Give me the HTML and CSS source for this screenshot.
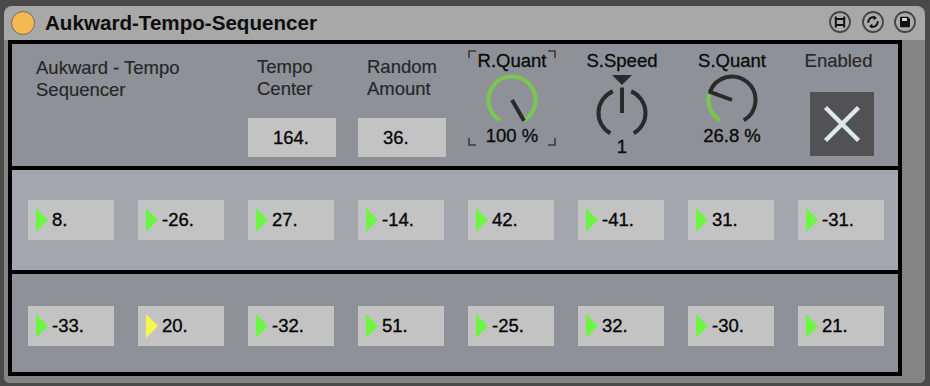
FILE: index.html
```html
<!DOCTYPE html>
<html>
<head>
<meta charset="utf-8">
<link rel="stylesheet" href="styles.css">
</head>
<body>
<div class="window">
  <div class="titlebar">
    <span class="dot"></span>
    <span class="title">Aukward-Tempo-Sequencer</span>
    <div class="tools">
      <svg class="tool" viewBox="0 0 22 22" width="22" height="22">
        <circle cx="11" cy="11" r="10" class="ring"/>
        <path d="M6.8 5.6V16.4M15.2 5.6V16.4M6.8 8.1H15.2M6.8 13.9H15.2" class="ink"/>
      </svg>
      <svg class="tool" viewBox="0 0 22 22" width="22" height="22">
        <circle cx="11" cy="11" r="10" class="ring"/>
        <path d="M6.3 11.8A4.9 4.9 0 0 1 12.9 6.6" class="ink"/>
        <path d="M11.6 4.4L15 6.9L11.7 9.3Z" class="fillink"/>
        <path d="M15.7 10.2A4.9 4.9 0 0 1 9.1 15.4" class="ink"/>
        <path d="M10.4 17.6L7 15.1L10.3 12.7Z" class="fillink"/>
      </svg>
      <svg class="tool" viewBox="0 0 22 22" width="22" height="22">
        <circle cx="11" cy="11" r="10" class="ring"/>
        <path d="M6 6.8Q6 5.8 7 5.8H13.8L16 8V15.2Q16 16.2 15 16.2H7Q6 16.2 6 15.2Z" class="fillink"/>
        <rect x="8" y="7" width="5" height="3" fill="#d6d6d6"/>
      </svg>
    </div>
  </div>
  <div class="body">
    <div class="panel">
      <section class="sec sec-top">
        <div class="intro">Aukward - Tempo<br>Sequencer</div>
        <div class="numcol">
          <div class="lbl">Tempo<br>Center</div>
          <div class="numbox">164.</div>
        </div>
        <div class="numcol">
          <div class="lbl">Random<br>Amount</div>
          <div class="numbox">36.</div>
        </div>
        <div class="dial dial-rq">
          <svg class="brackets" viewBox="0 0 88 96" width="88" height="96">
            <path d="M1 8V1H8M80 1H87V8M1 88V95H8M80 95H87V88"/>
          </svg>
          <div class="dlabel">R.Quant</div>
          <svg class="knob" viewBox="0 0 60 52" width="60" height="52">
            <path d="M18.25 46.35A23.5 23.5 0 1 1 41.75 46.35" class="arc-on"/>
            <path d="M30 26L42 46.8" class="needle"/>
          </svg>
          <div class="dval">100 %</div>
        </div>
        <div class="dial dial-sp">
          <div class="dlabel">S.Speed</div>
          <svg class="knob-sp" viewBox="0 0 60 68" width="60" height="68">
            <path d="M20 3H40L30 13Z" class="tri"/>
            <path d="M18.25 61.35A23.5 23.5 0 0 1 20.82 19.36" class="arc-off"/>
            <path d="M39.18 19.36A23.5 23.5 0 0 1 41.75 61.35" class="arc-off"/>
            <path d="M30 15.5V41" class="needle"/>
          </svg>
          <div class="dval dval-sp">1</div>
        </div>
        <div class="dial">
          <div class="dlabel">S.Quant</div>
          <svg class="knob" viewBox="0 0 60 52" width="60" height="52">
            <path d="M18.25 46.35A23.5 23.5 0 0 1 7.98 17.8" class="arc-on"/>
            <path d="M7.98 17.8A23.5 23.5 0 1 1 41.75 46.35" class="arc-off"/>
            <path d="M30 26L6.6 17.3" class="needle"/>
          </svg>
          <div class="dval">26.8 %</div>
        </div>
        <div class="togglecol">
          <div class="dlabel lbl-en">Enabled</div>
          <div class="toggle">
            <svg viewBox="0 0 64 64" width="64" height="64">
              <path d="M15.5 15.5L48.5 48.5M48.5 15.5L15.5 48.5" class="xmark"/>
            </svg>
          </div>
        </div>
      </section>
      <section class="sec sec-row sec-mid">
        <div class="step"><span class="play"></span>8.</div>
        <div class="step"><span class="play"></span>-26.</div>
        <div class="step"><span class="play"></span>27.</div>
        <div class="step"><span class="play"></span>-14.</div>
        <div class="step"><span class="play"></span>42.</div>
        <div class="step"><span class="play"></span>-41.</div>
        <div class="step"><span class="play"></span>31.</div>
        <div class="step"><span class="play"></span>-31.</div>
      </section>
      <section class="sec sec-row sec-bot">
        <div class="step"><span class="play"></span>-33.</div>
        <div class="step"><span class="play active"></span>20.</div>
        <div class="step"><span class="play"></span>-32.</div>
        <div class="step"><span class="play"></span>51.</div>
        <div class="step"><span class="play"></span>-25.</div>
        <div class="step"><span class="play"></span>32.</div>
        <div class="step"><span class="play"></span>-30.</div>
        <div class="step"><span class="play"></span>21.</div>
      </section>
    </div>
  </div>
</div>
</body>
</html>
```
FILE: styles.css
```css
* { box-sizing: border-box; }

html, body {
  margin: 0;
  padding: 0;
  background: #4a4a4a;
  width: 930px;
  height: 386px;
  overflow: hidden;
  font-family: "Liberation Sans", Arial, sans-serif;
}

.window {
  margin: 6px 0 0 4px;
  width: 921px;
  height: 377px;
  background: #a8a8a8;
  border-radius: 8px 8px 6px 6px;
  overflow: hidden;
  display: flex;
  flex-direction: column;
}

.titlebar {
  height: 34px;
  display: flex;
  align-items: center;
  padding-left: 7px;
  padding-right: 9px;
}

.dot {
  width: 24px;
  height: 24px;
  border-radius: 50%;
  background: #f5b94f;
  border: 1.5px solid #6c6a66;
  margin-right: 10px;
}

.title {
  font-weight: bold;
  font-size: 20.6px;
  line-height: 24px;
  color: #0d0d0d;
}

.tools {
  margin-left: auto;
  display: flex;
  gap: 10.5px;
  margin-top: -3px;
}

.tool .ring { fill: #acacac; stroke: #454545; stroke-width: 1.8; }
.tool .ink { fill: none; stroke: #111; stroke-width: 2; }
.tool .fillink { fill: #111; }

.body {
  flex: 1;
  background: #848484;
  padding-left: 4px;
}

.panel {
  width: 894px;
  height: 336px;
  border: 4px solid #000;
  background: #000;
  display: flex;
  flex-direction: column;
  gap: 4px;
}

.sec {
  display: grid;
  grid-template-columns: repeat(8, 110px);
  padding-left: 4px;
}

.sec-top {
  height: 122px;
  background: #8e9198;
  grid-template-columns: 220px repeat(6, 110px);
  align-items: start;
}

.intro {
  padding: 13px 0 0 20px;
  font-size: 18.5px;
  line-height: 22px;
  color: #262626;
  -webkit-text-stroke: 0.15px #262626;
}

.numcol {
  padding-top: 12px;
  display: flex;
  flex-direction: column;
}

.lbl {
  padding-left: 21px;
  font-size: 18.5px;
  line-height: 22px;
  color: #262626;
  -webkit-text-stroke: 0.15px #262626;
}

.numbox {
  margin: 18px 0 0 12px;
  width: 88px;
  height: 39px;
  background: #c3c3c3;
  font-size: 18.5px;
  line-height: 39px;
  padding-left: 25px;
  color: #050505;
  -webkit-text-stroke: 0.3px #050505;
}

.dial, .togglecol {
  display: flex;
  flex-direction: column;
  align-items: center;
  padding-top: 6px;
  padding-left: 2px;
}

.dial-rq { position: relative; }

.brackets {
  position: absolute;
  left: 12px;
  top: 6px;
}
.brackets path { fill: none; stroke: #3a3a3a; stroke-width: 1.6; }

.dlabel {
  font-size: 18.5px;
  line-height: 22px;
  color: #0a0a0a;
  -webkit-text-stroke: 0.3px #0a0a0a;
}

.lbl-en {
  color: #262626;
  -webkit-text-stroke: 0.15px #262626;
  margin-right: 7px;
}

.knob { margin-top: 2px; }

.arc-on { fill: none; stroke: #7bc64d; stroke-width: 4; }
.arc-off { fill: none; stroke: #2a2a2a; stroke-width: 4; }
.needle { fill: none; stroke: #2a2a2a; stroke-width: 4; }
.tri { fill: #2a2a2a; }

.dval {
  margin-top: -1px;
  font-size: 18.5px;
  line-height: 22px;
  color: #0a0a0a;
  -webkit-text-stroke: 0.3px #0a0a0a;
}

.dval-sp { margin-top: -4px; }

.toggle {
  margin-top: 20px;
  width: 64px;
  height: 64px;
  background: #525254;
}
.toggle svg { display: block; }
.xmark { stroke: #dce8e9; stroke-width: 4.5; fill: none; }

.sec-row { align-items: start; }

.sec-mid {
  height: 100px;
  background: #a3a6ad;
  padding-top: 30px;
}

.sec-bot {
  flex: 1;
  background: #8e9198;
  padding-top: 32px;
}

.step {
  margin-left: 12px;
  width: 86px;
  height: 40px;
  background: #c3c3c3;
  display: flex;
  align-items: center;
  padding-left: 8px;
  font-size: 18.5px;
  line-height: 40px;
  color: #050505;
  -webkit-text-stroke: 0.35px #050505;
}

.play {
  width: 0;
  height: 0;
  border-left: 12px solid #6cf542;
  border-top: 12px solid transparent;
  border-bottom: 12px solid transparent;
  margin-right: 4px;
}

.play.active { border-left-color: #f8f54e; }
```
